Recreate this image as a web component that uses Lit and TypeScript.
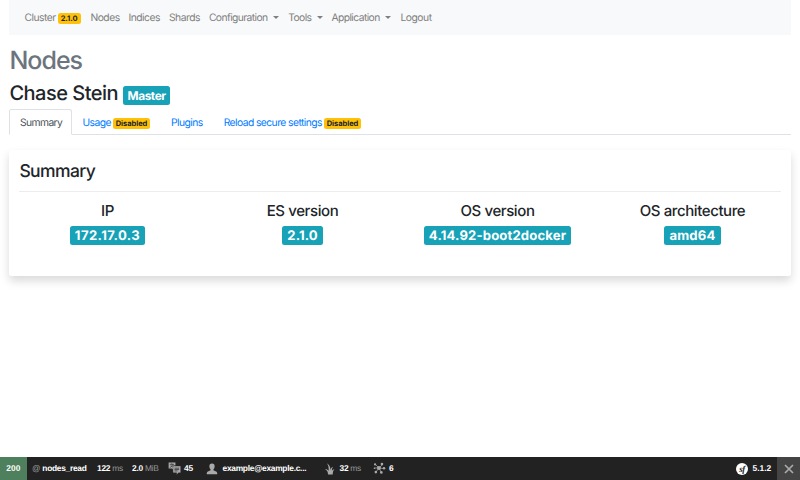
import { LitElement, html, css, svg } from "lit";
import { customElement } from "lit/decorators.js";

const nav = [
  { label: "Cluster", badge: "2.1.0", w: 66 },
  { label: "Nodes", w: 38 },
  { label: "Indices", w: 40.5 },
  { label: "Shards", w: 40 },
  { label: "Configuration", menu: true, w: 79.3 },
  { label: "Tools", menu: true, w: 43.3 },
  { label: "Application", menu: true, w: 69 },
  { label: "Logout", w: 40 },
];

const facts = [
  { label: "IP", value: "172.17.0.3", spacing: 0.4 },
  { label: "ES version", value: "2.1.0", spacing: 0.1 },
  { label: "OS version", value: "4.14.92-boot2docker", spacing: 0.15 },
  { label: "OS architecture", value: "amd64", spacing: 0.2 },
];

const translation = svg`<path fill="#aaa" d="M1 1h11v4.500H8.500V12L6 10.500H1z"/><path stroke="#222" stroke-width="1" fill="none" d="M3 3.800h6.500M6 2.300v1.500M8 3.800C7.500 6 5 8 3 9M4.500 5.500l3 3"/><path fill="#aaa" stroke="#222" stroke-width=".6" d="M8 6.500h12.500v11H17L14 20.500v-3H8z"/><path stroke="#222" stroke-width="1.100" d="M10.500 10h7.500M10.500 12.200h7.500M10.500 14.400h5"/>`;
const user = svg`<path fill="#aaa" d="M10.500 1c3.200 0 4.800 2.300 4.600 5.300-.1 2-.9 4-2.100 5v1.500c1.500.7 4 1.400 5.500 2.500 1 .8 1.200 2.400 1.200 4.200H1.300c0-1.800.2-3.400 1.200-4.200 1.500-1.100 4-1.800 5.500-2.500v-1.500c-1.200-1-2-3-2.100-5C5.700 3.300 7.300 1 10.500 1z"/>`;
const twig = svg`<path fill="#aaa" d="M7 20C7 15.500 5 12 1.500 11c3-.6 5.200.6 6.500 3C8.500 9 8 4 5 0.500c4.200 2 6.500 7 6.500 12 .3-3 1.500-5.500 4.500-6-2 2-2.200 4.500-2.100 7 .8-1.300 2.500-2.200 4.600-2-2.600 1.500-3.200 5-3.200 8.500z"/>`;
const cache = svg`<g stroke="#aaa" stroke-width="1.200"><path d="M10 10 3.500 3.500M10 10l6-5.500M10 10H2.500M10 10l7.500 1M10 10l-5 7M10 10l4 7.500"/></g><g fill="#aaa"><circle cx="10" cy="10" r="3.300"/><circle cx="3.500" cy="4" r="1.900"/><circle cx="15" cy="3.500" r="2.200"/><circle cx="2.500" cy="10.500" r="1.400"/><circle cx="18.500" cy="10.500" r="2.100"/><circle cx="4.800" cy="17" r="2.200"/><circle cx="14" cy="17.500" r="2.200"/></g>`;

@customElement("app-root")
export class AppRoot extends LitElement {
  static styles = css`
    :host {
      display: flex;
      flex-direction: column;
      height: 480px;
      overflow: hidden;
      background: #fff;
      color: #212529;
      font: 10px/15px Inter, "Liberation Sans", sans-serif;
      text-rendering: geometricPrecision;
    }
    * { box-sizing: border-box; }
    main { flex: 1; padding: 0 9.4px; }
    nav { display: flex; align-items: center; height: 35px; padding: 2px 0 0 15px; background: #f8f9fa; color: #7f8080; }
    .item { flex: none; white-space: nowrap; font-size: 10.300px; letter-spacing: -0.48px; }
    .menu { letter-spacing: -0.58px; }
    .badge {
      display: inline-block;
      padding: 0.25em 0.4em;
      border-radius: 2.5px;
      font-size: 7.5px;
      font-weight: 700;
      line-height: 1;
      letter-spacing: -0.05px;
      vertical-align: baseline;
      white-space: nowrap;
    }
    .warning { background: #ffc107; color: #212529; margin-left: -0.5px; }
    .caret { display: inline-block; margin-left: 5.500px; vertical-align: 2.500px; border: 3px solid transparent; border-top-color: currentColor; border-bottom: 0; }
    .info { background: #17a2b8; color: #fff; }
    h1, h2, h3, h4 { margin: 0; font-weight: 500; line-height: 1.2; }
    h1 { margin-top: 11px; height: 30px; font-size: 25px; color: #6c757d; letter-spacing: -0.98px; }
    h2 { margin-top: 4.500px; height: 24px; font-size: 20px; letter-spacing: -0.5px; white-space: nowrap; }
    h2 .badge { font-size: 11.900px; letter-spacing: -0.45px; padding: 3.300px 4.600px; }
    .tabs { display: flex; height: 26px; margin-top: 4.500px; border-bottom: 1px solid #dee2e6; color: #007bff; }
    .tab { flex: none; height: 26px; padding: 5.800px 9.500px 0; border: 1px solid transparent; white-space: nowrap; font-size: 10.300px; letter-spacing: -0.56px; }
    .active { background: #fff; color: #495057; border-color: #dee2e6 #dee2e6 #fff; border-radius: 2.5px 2.5px 0 0; }
    .card { height: 126px; margin-top: 15px; padding: 10.600px 10px 0; border-radius: 2.5px; background: #fff; box-shadow: 0 5px 10px rgba(0, 0, 0, 0.15); }
    h3 { font-size: 17.5px; padding-bottom: 9px; border-bottom: 1px solid #ececec; letter-spacing: -0.6px; }
    .facts { display: grid; grid-template-columns: repeat(4, 1fr); margin: 10.200px -9.4px 0; text-align: center; }
    h4 { font-size: 15px; margin-bottom: 5.800px; letter-spacing: -0.4px; }
    .facts .badge { font-size: 13.1px; padding: 4px 5.200px 2.600px; }
    .fact { display: flex; flex-direction: column; align-items: center; }
    footer { display: flex; height: 23px; background: #222; color: #fff; font: 700 8.400px/23px "Liberation Sans", sans-serif; letter-spacing: -0.27px; white-space: nowrap; }
    footer span { flex: none; }
    .soft { color: #999; font-weight: 400; }
    .status { width: 27px; background: #4f805d; text-align: center; letter-spacing: 0.1px; }
    .block { display: flex; align-items: center; }
    .block svg { display: block; }
    .version { width: 41px; margin-left: auto; gap: 4.500px; letter-spacing: 0; }
    .close { width: 23px; background: #444; display: grid; place-items: center; }
    .sf { display: grid; place-items: center; width: 12px; height: 12px; border-radius: 50%; background: #fff; color: #222; font: italic 700 9px/10px "Liberation Serif", serif; letter-spacing: -0.5px; }
  `;

  private icon(shape: unknown, size: number) {
    return html`<svg width=${size} height=${size} viewBox="0 0 21 21">${shape}</svg>`;
  }

  private off() {
    return html`<span class="badge warning">Disabled</span>`;
  }

  private block(width: number, content: unknown) {
    return html`<span class="block" style="width:${width}px">${content}</span>`;
  }

  render() {
    return html`
      <main>
        <nav>
          ${nav.map((n) => html`<span class="item ${n.menu ? "menu" : ""}" style="width:${n.w}px">${n.label}${n.badge ? html` <span class="badge warning">${n.badge}</span>` : ""}${n.menu ? html`<i class="caret"></i>` : ""}</span>`)}
        </nav>
        <h1>Nodes</h1>
        <h2>Chase Stein <span class="badge info">Master</span></h2>
        <div class="tabs">
          <span class="tab active" style="width:62.6px">Summary</span>
          <span class="tab" style="width:88.600px">Usage ${this.off()}</span>
          <span class="tab" style="width:52.600px">Plugins</span>
          <span class="tab">Reload secure settings ${this.off()}</span>
        </div>
        <section class="card">
          <h3>Summary</h3>
          <div class="facts">
            ${facts.map((f) => html`<div class="fact"><h4>${f.label}</h4><span class="badge info" style="letter-spacing:${f.spacing}px">${f.value}</span></div>`)}
          </div>
        </section>
      </main>
      <footer>
        <span class="status">200</span>
        ${this.block(5, "")}
        ${this.block(65, html`<span class="soft">@</span>&nbsp;nodes_read`)}
        ${this.block(35, html`122&nbsp;<span class="soft">ms</span>`)}
        ${this.block(35.5, html`2.0&nbsp;<span class="soft">MiB</span>`)}
        ${this.block(16.500, this.icon(translation, 13))}
        ${this.block(22, "45")}
        ${this.block(16.500, this.icon(user, 12))}
        ${this.block(101.500, "example@example.c...")}
        ${this.block(15.500, this.icon(twig, 12))}
        ${this.block(33.500, html`32&nbsp;<span class="soft">ms</span>`)}
        ${this.block(16, this.icon(cache, 12.500))}
        ${this.block(20, "6")}
        <span class="block version"><span class="sf">sf</span><span>5.1.2</span></span>
        <span class="close"><svg width="10" height="10" viewBox="0 0 10 10"><path d="M1 1l8 8M9 1L1 9" stroke="#aaa" stroke-width="1.700" /></svg></span>
      </footer>
    `;
  }
}
